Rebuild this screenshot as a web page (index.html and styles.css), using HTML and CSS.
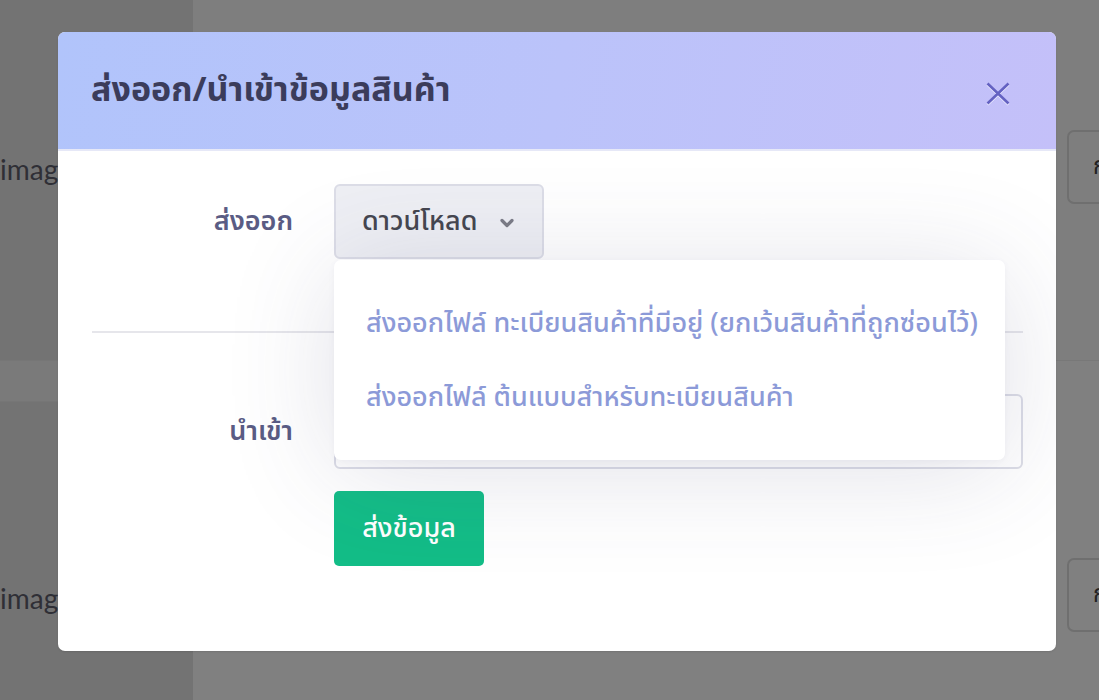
FILE: index.html
```html
<!DOCTYPE html>
<html lang="th">
<head>
<meta charset="utf-8">
<title>ส่งออก/นำเข้าข้อมูลสินค้า</title>
<link rel="stylesheet" href="styles.css">
</head>
<body>
<div class="page">
  <div class="cell side row1"><span class="bg-text">image</span></div>
  <div class="cell main row1"><div class="bg-box">ก</div></div>
  <div class="cell side band"></div>
  <div class="cell main band"></div>
  <div class="cell side row2"><span class="bg-text">image</span></div>
  <div class="cell main row2"><div class="bg-box">ก</div></div>
</div>

<div class="modal">
  <div class="modal-header">
    <h2 class="modal-title">ส่งออก/นำเข้าข้อมูลสินค้า</h2>
    <button class="close" aria-label="close">
      <svg width="24" height="23" viewBox="0 0 24 23"><path d="M1.5 1.5 L22.5 21.5 M22.5 1.5 L1.5 21.5" stroke="currentColor" stroke-width="2.6" fill="none"/></svg>
    </button>
  </div>
  <div class="modal-body">
    <div class="form-row">
      <label class="form-label">ส่งออก</label>
      <div class="form-field dropdown-wrap">
        <button class="select-btn">ดาวน์โหลด
          <svg class="chev" width="16" height="10" viewBox="0 0 16 10"><path d="M3 2.5 L8 7.5 L13 2.5" stroke="currentColor" stroke-width="3.2" fill="none" stroke-linecap="round" stroke-linejoin="round"/></svg>
        </button>
        <ul class="menu">
          <li>ส่งออกไฟล์ ทะเบียนสินค้าที่มีอยู่ (ยกเว้นสินค้าที่ถูกซ่อนไว้)</li>
          <li>ส่งออกไฟล์ ต้นแบบสำหรับทะเบียนสินค้า</li>
        </ul>
      </div>
    </div>
    <hr class="divider">
    <div class="form-row">
      <label class="form-label">นำเข้า</label>
      <div class="form-field">
        <div class="file-input"></div>
      </div>
    </div>
    <div class="form-row actions">
      <div></div>
      <div class="form-field"><button class="submit">ส่งข้อมูล</button></div>
    </div>
  </div>
</div>
</body>
</html>
```

FILE: styles.css
```css
html, body {
  margin: 0;
  padding: 0;
  width: 1099px;
  height: 700px;
  overflow: hidden;
  font-family: "Noto Sans Thai", "Noto Sans", "DejaVu Sans", sans-serif;
}

.page {
  display: grid;
  grid-template-columns: 193px 1fr;
  grid-template-rows: 360px 42px 298px;
  height: 700px;
  background: #808080;
}

.cell { display: flex; align-items: center; overflow: hidden; }
.side { background: #737373; }
.main { background: #808080; }
.side.band { background: #7a7a7a; border-top: 1px solid #767676; border-bottom: 1px solid #767676; box-sizing: border-box; }
.main.band { background: #808080; border-top: 1px solid #787878; box-sizing: border-box; }
.main.row1 { background: #7e7e7e; }

.row1 { align-items: flex-start; padding-top: 147px; box-sizing: border-box; }
.row2 { align-items: flex-start; padding-top: 174px; box-sizing: border-box; }
.main.row1 { padding-top: 130px; }
.main.row2 { padding-top: 156px; }

.bg-text {
  font-family: "Lato", "Open Sans", sans-serif;
  font-size: 28px;
  color: #2f2f36;
  line-height: 44px;
}

.bg-box {
  margin-left: auto;
  margin-right: -20px;
  width: 52px;
  height: 74px;
  border: 2px solid #6f6f6f;
  border-radius: 7px;
  display: flex;
  align-items: center;
  padding-left: 24px;
  font-size: 24px;
  color: #222;
  box-sizing: border-box;
}

/* modal */
.modal {
  position: absolute;
  left: 58px;
  top: 32px;
  width: 998px;
  height: 619px;
  background: #fff;
  border-radius: 7px;
  overflow: hidden;
  box-shadow: 0 1px 2px rgba(0,0,0,0.1);
}

.modal-header {
  height: 119px;
  box-sizing: border-box;
  display: flex;
  align-items: center;
  justify-content: space-between;
  padding: 0 46px 0 33px;
  background: linear-gradient(100deg, #b1c4fb 0%, #bbc3fa 50%, #c4c0f9 100%);
  border-bottom: 2px solid #e6e8f7;
}

.modal-title {
  margin: 0;
  font-size: 34px;
  font-weight: 700;
  color: #3b3c5b;
  letter-spacing: 0;
}

.close {
  border: 0;
  background: none;
  padding: 0;
  margin-top: 6px;
  color: #6462c2;
  display: flex;
  filter: drop-shadow(0 1px 0 rgba(255,255,255,0.7));
}

.modal-body {
  padding: 33px 33px 0 34px;
}

.form-row {
  display: grid;
  grid-template-columns: 242px 1fr;
  align-items: center;
}

.form-label {
  text-align: right;
  padding-right: 41px;
  font-size: 27px;
  font-weight: 600;
  color: #5a5c84;
}

.form-field { position: relative; }

.select-btn {
  width: 210px;
  height: 75px;
  border: 2px solid #dcdde7;
  border-radius: 6px;
  background: #eeeff4;
  font-family: inherit;
  font-size: 27px;
  font-weight: 500;
  color: #45464f;
  display: flex;
  align-items: center;
  padding: 0 0 0 26px;
  gap: 22px;
  box-sizing: border-box;
}

.chev { color: #7b7c86; margin-top: 3px; }

.menu {
  position: absolute;
  left: 0;
  top: 76px;
  width: 671px;
  height: 200px;
  margin: 0;
  padding: 26px 0;
  box-sizing: border-box;
  list-style: none;
  background: #fff;
  border-radius: 7px;
  box-shadow: 0 10px 110px rgba(70,70,110,0.16), 0 2px 6px rgba(70,70,110,0.05);
  z-index: 2;
}

.menu li {
  height: 74px;
  display: flex;
  align-items: center;
  padding-left: 32px;
  font-size: 27px;
  font-weight: 500;
  color: #8c9ad8;
  white-space: nowrap;
}

.divider {
  border: 0;
  border-top: 2px solid #e6e6eb;
  margin: 72px 0 61px 0;
}

.file-input {
  height: 75px;
  border: 2px solid #dcdde7;
  border-radius: 6px;
  box-sizing: border-box;
}

.actions { margin-top: 22px; }

.submit {
  width: 150px;
  height: 75px;
  border: 0;
  border-radius: 5px;
  background: #13bd87;
  color: #fff;
  font-family: inherit;
  font-size: 27px;
  font-weight: 500;
}
```
